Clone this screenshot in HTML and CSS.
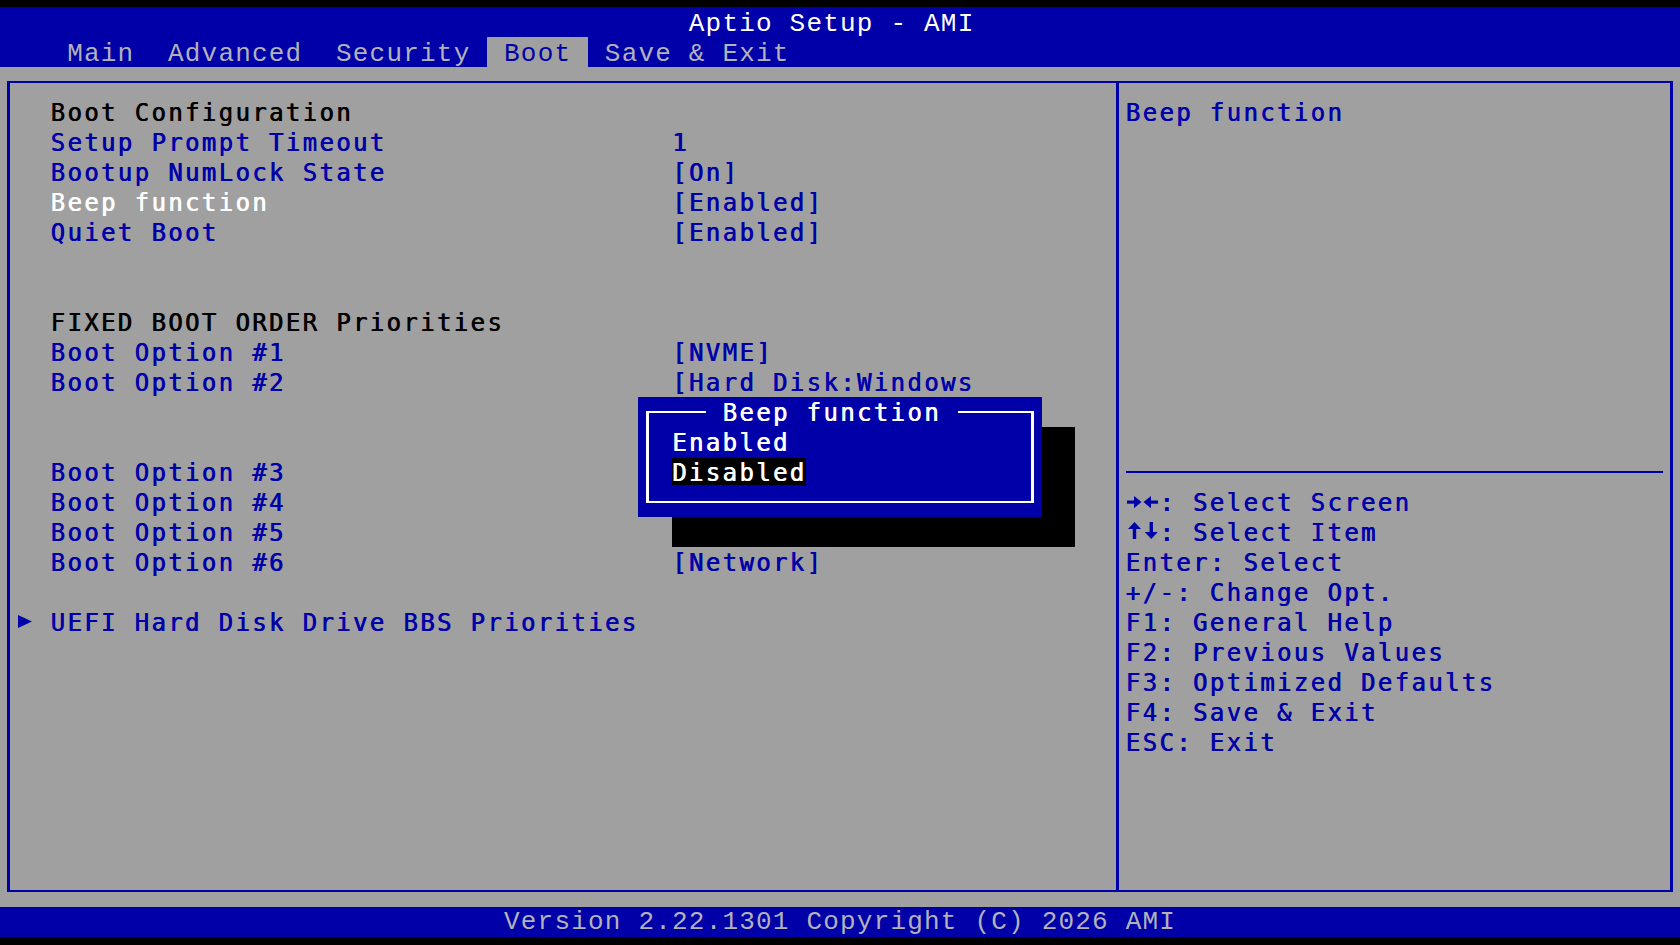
FILE: index.html
```html
<!DOCTYPE html>
<html lang="en">
<head>
<meta charset="utf-8">
<title>Aptio Setup - AMI</title>
<link rel="stylesheet" href="styles.css">
</head>
<body>
<div class="screen">
  <header class="topbar">
    <div class="title">Aptio Setup - AMI</div>
    <nav class="tabs">
      <span class="tab">Main</span>
      <span class="tab">Advanced</span>
      <span class="tab">Security</span>
      <span class="tab active">Boot</span>
      <span class="tab">Save &amp; Exit</span>
    </nav>
  </header>
  <main class="work">
    <div class="frame">
      <section class="settings">
        <div class="row heading"><span class="mark"></span><span class="label">Boot Configuration</span><span class="value"></span></div>
        <div class="row"><span class="mark"></span><span class="label">Setup Prompt Timeout</span><span class="value">1</span></div>
        <div class="row"><span class="mark"></span><span class="label">Bootup NumLock State</span><span class="value">[On]</span></div>
        <div class="row current"><span class="mark"></span><span class="label">Beep function</span><span class="value">[Enabled]</span></div>
        <div class="row"><span class="mark"></span><span class="label">Quiet Boot</span><span class="value">[Enabled]</span></div>
        <div class="row blank"></div>
        <div class="row blank"></div>
        <div class="row heading"><span class="mark"></span><span class="label">FIXED BOOT ORDER Priorities</span><span class="value"></span></div>
        <div class="row"><span class="mark"></span><span class="label">Boot Option #1</span><span class="value">[NVME]</span></div>
        <div class="row"><span class="mark"></span><span class="label">Boot Option #2</span><span class="value">[Hard Disk:Windows</span></div>
        <div class="row blank"></div>
        <div class="row blank"></div>
        <div class="row"><span class="mark"></span><span class="label">Boot Option #3</span><span class="value"></span></div>
        <div class="row"><span class="mark"></span><span class="label">Boot Option #4</span><span class="value"></span></div>
        <div class="row"><span class="mark"></span><span class="label">Boot Option #5</span><span class="value"></span></div>
        <div class="row"><span class="mark"></span><span class="label">Boot Option #6</span><span class="value">[Network]</span></div>
        <div class="row blank"></div>
        <div class="row"><span class="mark"><svg class="tri" width="16" height="28" viewBox="0 0 16 28"><polygon points="1,6 15,12.5 1,19"/></svg></span><span class="label">UEFI Hard Disk Drive BBS Priorities</span><span class="value"></span></div>
      </section>
      <aside class="help">
        <div class="help-text">Beep function</div>
        <div class="sep"></div>
        <ul class="keys">
          <li><svg class="keyicon" width="33.6" height="28" viewBox="0 0 33.6 28"><rect x="1" y="11.5" width="8" height="3.2"/><polygon points="8,7 15.5,13.1 8,19.2"/><polygon points="17.5,13.1 25,7 25,19.2"/><rect x="24" y="11.5" width="8" height="3.2"/></svg>: Select Screen</li>
          <li><svg class="keyicon" width="33.6" height="28" viewBox="0 0 33.6 28"><polygon points="2,10 8.5,3 15,10"/><rect x="6.8" y="9" width="3.4" height="11"/><rect x="23.6" y="3" width="3.4" height="11"/><polygon points="18.8,13 25.3,20 31.8,13"/></svg>: Select Item</li>
          <li>Enter: Select</li>
          <li>+/-: Change Opt.</li>
          <li>F1: General Help</li>
          <li>F2: Previous Values</li>
          <li>F3: Optimized Defaults</li>
          <li>F4: Save &amp; Exit</li>
          <li>ESC: Exit</li>
        </ul>
      </aside>
    </div>
  </main>
  <footer class="footer">Version 2.22.1301 Copyright (C) 2026 AMI</footer>

  <div class="shadow"></div>
  <div class="popup">
    <div class="popup-frame">
      <div class="popup-title">Beep function</div>
      <div class="opt">Enabled</div>
      <div class="opt"><span class="hl">Disabled</span></div>
    </div>
  </div>
</div>
</body>
</html>
```

FILE: styles.css
```css
html, body {
  margin: 0;
  padding: 0;
  background: #000;
}

body {
  width: 1680px;
  height: 945px;
  overflow: hidden;
}

.screen {
  position: relative;
  width: 1680px;
  height: 945px;
  padding-top: 7px;
  box-sizing: border-box;
  font-family: "DejaVu Sans Mono", monospace;
  font-size: 24px;
  letter-spacing: 2.35px;
  line-height: 28px;
  text-shadow: 0.7px 0 0 currentColor;
  white-space: nowrap;
  color: #0000a8;
}

/* ---------- header ---------- */
.topbar {
  background: #0000a8;
  height: 60px;
  font-family: "Liberation Mono", monospace;
  font-size: 26px;
  letter-spacing: 1.2px;
  text-shadow: none;
}

.title {
  height: 30px;
  padding: 2px 0 0 688.8px;
  box-sizing: border-box;
  line-height: 30px;
  color: #ffffff;
}

.tabs {
  display: flex;
  height: 30px;
  padding-left: 50.4px;
  line-height: 30px;
}

.tab {
  padding: 2px 16.8px 0;
  color: #b2b2b8;
}

.tab.active {
  background: #a0a0a0;
  color: #0000a8;
}

/* ---------- work area ---------- */
.work {
  background: #a0a0a0;
  height: 840px;
  padding: 14px 7px 0;
  box-sizing: border-box;
}

.frame {
  display: flex;
  height: 811px;
  border-style: solid;
  border-color: #0000a8;
  border-width: 2px 3px;
  box-sizing: border-box;
}

.settings {
  width: 1105.5px;
  padding: 14px 0 0 6.8px;
  box-sizing: border-box;
}

.row {
  display: grid;
  grid-template-columns: 33.6px 621.6px 1fr;
  height: 30px;
  padding-top: 2px;
  box-sizing: border-box;
}

.heading {
  color: #000000;
}

.current .label {
  color: #ffffff;
}

.tri {
  display: block;
  fill: #0000a8;
}

.help {
  flex: 1;
  border-left: 3px solid #0000a8;
  padding: 14px 0 0 7.1px;
}

.help-text {
  height: 360px;
  padding-top: 2px;
  box-sizing: border-box;
}

.sep {
  width: 537.6px;
  height: 14px;
  border-bottom: 2px solid #0000a8;
  margin-bottom: 14px;
}

.keys {
  list-style: none;
  margin: 0;
  padding: 0;
}

.keys li {
  height: 30px;
  padding-top: 2px;
  box-sizing: border-box;
}

.keyicon {
  display: inline-block;
  vertical-align: top;
  fill: #0000a8;
}

/* ---------- footer ---------- */
.footer {
  height: 30px;
  background: #0000a8;
  padding-left: 504px;
  line-height: 30px;
  color: #b2b2b8;
  font-family: "Liberation Mono", monospace;
  font-size: 26px;
  letter-spacing: 1.2px;
  text-shadow: none;
}

/* ---------- popup ---------- */
.shadow {
  position: absolute;
  left: 672px;
  top: 427px;
  width: 403.2px;
  height: 120px;
  background: #000;
}

.popup {
  position: absolute;
  left: 638.4px;
  top: 397px;
  width: 403.2px;
  height: 120px;
  background: #0000a8;
  padding: 14px 7.4px;
  box-sizing: border-box;
}

.popup-frame {
  position: relative;
  height: 92px;
  border-style: solid;
  border-color: #ffffff;
  border-width: 2px 3px;
  box-sizing: border-box;
  padding: 14px 0 0 23.2px;
}

.popup-title {
  position: absolute;
  top: -16px;
  left: 56.8px;
  padding: 2px 16.8px 0;
  box-sizing: border-box;
  background: #0000a8;
  color: #ffffff;
  height: 30px;
}

.opt {
  height: 30px;
  padding-top: 2px;
  box-sizing: border-box;
  color: #ffffff;
}

.hl {
  display: inline-block;
  background: #000000;
  height: 27px;
  margin-top: -1px;
  padding-top: 1px;
  box-sizing: border-box;
  vertical-align: top;
}
```
